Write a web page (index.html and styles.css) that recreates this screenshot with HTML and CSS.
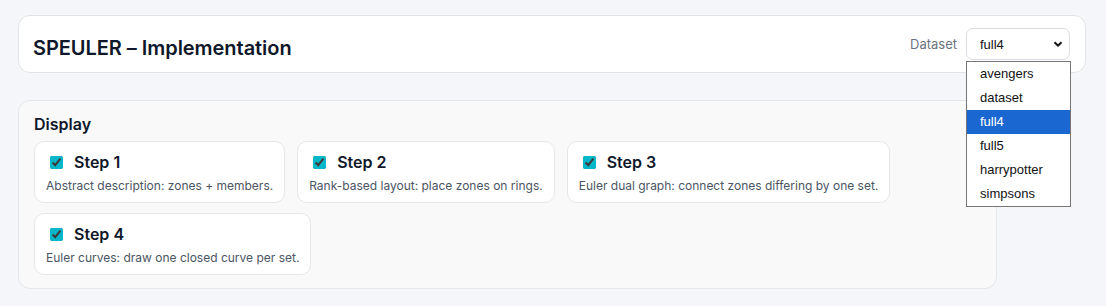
FILE: index.html
```html
<!DOCTYPE html>
<html>
<head>
<meta charset="utf-8">
<link rel="stylesheet" href="styles.css">
</head>
<body>
<div class="app">
  <header class="topbar">
    <h1 class="title">SPEULER – Implementation</h1>
    <div class="dataset">
      <label class="dataset-label" for="ds">Dataset</label>
      <div class="select-wrap">
        <select id="ds" class="select">
          <option>avengers</option>
          <option>dataset</option>
          <option selected>full4</option>
          <option>full5</option>
          <option>harrypotter</option>
          <option>simpsons</option>
        </select>
        <ul class="menu">
          <li class="menu-item">avengers</li>
          <li class="menu-item">dataset</li>
          <li class="menu-item active">full4</li>
          <li class="menu-item">full5</li>
          <li class="menu-item">harrypotter</li>
          <li class="menu-item">simpsons</li>
        </ul>
      </div>
    </div>
  </header>

  <section class="panel">
    <h2 class="panel-title">Display</h2>
    <div class="steps">
      <label class="step">
        <span class="step-head"><input type="checkbox" checked><span class="step-name">Step 1</span></span>
        <span class="step-desc">Abstract description: zones + members.</span>
      </label>
      <label class="step">
        <span class="step-head"><input type="checkbox" checked><span class="step-name">Step 2</span></span>
        <span class="step-desc">Rank-based layout: place zones on rings.</span>
      </label>
      <label class="step">
        <span class="step-head"><input type="checkbox" checked><span class="step-name">Step 3</span></span>
        <span class="step-desc">Euler dual graph: connect zones differing by one set.</span>
      </label>
      <label class="step">
        <span class="step-head"><input type="checkbox" checked><span class="step-name">Step 4</span></span>
        <span class="step-desc">Euler curves: draw one closed curve per set.</span>
      </label>
    </div>
  </section>
</div>
</body>
</html>
```

FILE: styles.css
```css
* { box-sizing: border-box; }
html, body { margin: 0; padding: 0; }
body {
  background: #f5f6fa;
  font-family: Inter, "Noto Sans", sans-serif;
  color: #111827;
}
.app {
  padding: 15px 20px 16px 18px;
  display: flex;
  flex-direction: column;
  gap: 27px;
}
.topbar {
  height: 58px;
  background: #ffffff;
  border: 1px solid #e2e4ea;
  border-radius: 12px;
  display: flex;
  align-items: center;
  justify-content: space-between;
  padding: 0 15px 0 14px;
}
.title {
  margin: 8px 0 0 0;
  font-size: 20px;
  font-weight: 600;
  color: #0f172a;
  letter-spacing: -0.05px;
}
.dataset {
  display: flex;
  align-items: center;
  gap: 9px;
}
.dataset-label {
  font-size: 13px;
  color: #6b7280;
}
.select-wrap { position: relative; }
.select {
  appearance: none;
  -webkit-appearance: none;
  width: 104px;
  height: 32px;
  border: 1px solid #d9dce3;
  border-radius: 7px;
  background: #ffffff url("data:image/svg+xml,%3Csvg xmlns='http://www.w3.org/2000/svg' width='10' height='8' viewBox='0 0 10 8'%3E%3Cpath d='M1.5 2.2 L5 5.6 L8.5 2.2' fill='none' stroke='%23111' stroke-width='2'/%3E%3C/svg%3E") no-repeat right 6px center;
  padding: 0 20px 0 13px;
  font-family: "Liberation Sans", Arial, sans-serif;
  font-size: 13px;
  color: #111;
}
.menu {
  position: absolute;
  top: 33px;
  left: 0;
  width: 105px;
  margin: 0;
  padding: 0;
  list-style: none;
  background: #ffffff;
  border: 1px solid #767676;
  font-family: "Liberation Sans", Arial, sans-serif;
  font-size: 13px;
  color: #111;
  z-index: 10;
}
.menu-item {
  height: 24px;
  line-height: 24px;
  padding-left: 13px;
}
.menu-item.active {
  background: #1a67d2;
  color: #ffffff;
}
.panel {
  width: 979px;
  background: #f9f9fa;
  border: 1px solid #e5e7eb;
  border-radius: 12px;
  padding: 12px 15px 13px 15px;
}
.panel-title {
  margin: 0 0 6px 0;
  font-size: 16px;
  font-weight: 600;
  line-height: 22px;
  color: #0f172a;
}
.steps {
  display: flex;
  flex-wrap: wrap;
  gap: 10px 12px;
}
.step {
  display: flex;
  flex-direction: column;
  background: #ffffff;
  border: 1px solid #e5e7eb;
  border-radius: 10px;
  padding: 8px 11px 8px 11px;
}
.step-head {
  display: flex;
  align-items: center;
  height: 24px;
}
.step-head input {
  accent-color: #06b6c9;
  width: 13px;
  height: 13px;
  margin: 0 3px 0 4px;
}
.step-name {
  margin-left: 8px;
  font-size: 16px;
  font-weight: 600;
  color: #0f172a;
}
.step-desc {
  margin-top: 4px;
  font-size: 12px;
  line-height: 16px;
  color: #4b5563;
}
```
